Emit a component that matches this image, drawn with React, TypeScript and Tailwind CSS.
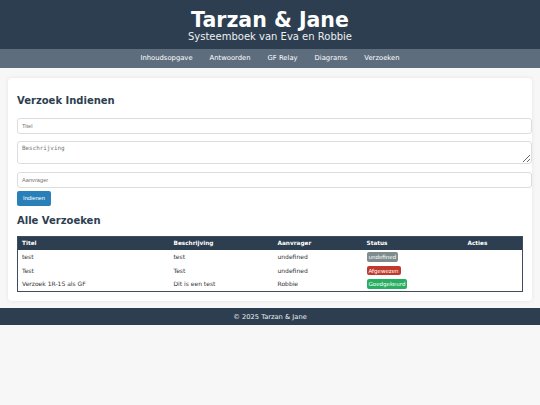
import React from "react";

const rows = [
  { titel: "test", beschrijving: "test", aanvrager: "undefined", status: "undefined", color: "bg-[#7f8c8d]" },
  { titel: "Test", beschrijving: "Test", aanvrager: "undefined", status: "Afgewezen", color: "bg-[#c0392b]" },
  { titel: "Verzoek 1R-1S als GF", beschrijving: "Dit is een test", aanvrager: "Robbie", status: "Goedgekeurd", color: "bg-[#27ae60]" },
];

export default function App() {
  return (
    <div className="min-h-[405px] bg-[#f7f7f7] font-['DejaVu_Sans',sans-serif] text-[#333]">
      <header className="bg-[#2c3e50] h-[49px] flex flex-col items-center pt-[10px] text-white">
        <h1 className="text-[20.5px] leading-[20px] font-bold">Tarzan &amp; Jane</h1>
        <p className="text-[10px] leading-[10px] mt-[2.4px] text-[#ecf0f1]">Systeemboek van Eva en Robbie</p>
      </header>
      <nav className="bg-[#5d6d7e] h-[19px] flex justify-center items-center gap-[17px] text-[6.8px] text-white">
        <a>Inhoudsopgave</a>
        <a>Antwoorden</a>
        <a>GF Relay</a>
        <a>Diagrams</a>
        <a>Verzoeken</a>
      </nav>
      <main className="px-[8px] pt-[9.5px]">
        <div className="bg-white rounded-[4px] shadow-[0_0_4px_rgba(0,0,0,0.08)] px-[9px] pt-[17px] pb-[9px] flex flex-col items-start">
          <h2 className="text-[10px] leading-[12px] font-bold text-[#2c3e50]">Verzoek Indienen</h2>
          <input
            placeholder="Titel"
            className="mt-[11.5px] block w-[calc(100%+9px)] h-[16px] border border-[#ddd] rounded-[3px] px-[4px] text-[5.7px] font-['Liberation_Sans',sans-serif] placeholder:text-[#757575] outline-none"
          />
          <textarea
            placeholder="Beschrijving"
            className="mt-[7px] block w-[calc(100%+9px)] h-[23px] border border-[#ddd] rounded-[3px] px-[4px] pt-[3px] text-[5.9px] leading-[7px] font-['DejaVu_Sans_Mono',monospace] placeholder:text-[#757575] outline-none"
          />
          <input
            placeholder="Aanvrager"
            className="mt-[8px] block w-[calc(100%+9px)] h-[16px] border border-[#ddd] rounded-[3px] px-[4px] text-[5.7px] font-['Liberation_Sans',sans-serif] placeholder:text-[#757575] outline-none"
          />
          <button className="mt-[3px] h-[15px] w-[34px] bg-[#2980b9] rounded-[2px] text-white text-[5.7px] font-['Liberation_Sans',sans-serif]">
            Indienen
          </button>
          <h2 className="mt-[8.5px] text-[10px] leading-[12px] font-bold text-[#2c3e50]">Alle Verzoeken</h2>
          <table className="mt-[9px] w-full table-fixed border-collapse border border-[#3d4d5e] text-[6px] text-[#333]">
            <colgroup>
              <col className="w-[152px]" />
              <col className="w-[104px]" />
              <col className="w-[89px]" />
              <col className="w-[101px]" />
              <col />
            </colgroup>
            <thead>
              <tr className="bg-[#2c3e50] text-white h-[14px]">
                <th className="text-left font-bold pl-[4px] text-[5.75px]">Titel</th>
                <th className="text-left font-bold pl-[4px] text-[5.75px]">Beschrijving</th>
                <th className="text-left font-bold pl-[4px] text-[5.75px]">Aanvrager</th>
                <th className="text-left font-bold pl-[4px] text-[5.75px]">Status</th>
                <th className="text-left font-bold pl-[4px] text-[5.75px]">Acties</th>
              </tr>
            </thead>
            <tbody>
              {rows.map((r) => (
                <tr key={r.titel + r.status} className="h-[13.7px]">
                  <td className="pl-[4px] p-0">{r.titel}</td>
                  <td className="pl-[4px] p-0">{r.beschrijving}</td>
                  <td className="pl-[4px] p-0">{r.aanvrager}</td>
                  <td className="pl-[4px] p-0">
                    <span className={`inline-flex items-center h-[9.5px] px-[2px] rounded-[2px] text-white text-[5.5px] ${r.color}`}>
                      {r.status}
                    </span>
                  </td>
                  <td className="p-0"></td>
                </tr>
              ))}
            </tbody>
          </table>
        </div>
      </main>
      <footer className="mt-[7.5px] bg-[#2c3e50] h-[17px] flex items-center justify-center text-[6.7px] text-[#ecf0f1]">
        © 2025 Tarzan &amp; Jane
      </footer>
    </div>
  );
}
